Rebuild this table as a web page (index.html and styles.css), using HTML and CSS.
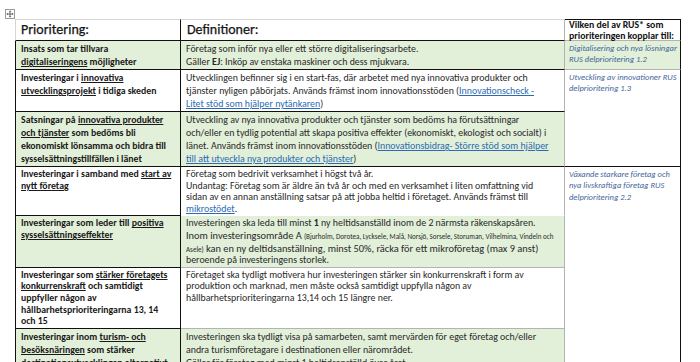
FILE: index.html
```html
<!DOCTYPE html>
<html lang="sv">
<head>
<meta charset="utf-8">
<title>Prioritering</title>
<link rel="stylesheet" href="styles.css">
</head>
<body>
<div class="page">
  <svg class="move-handle" width="10" height="10" viewBox="0 0 10 10" aria-hidden="true">
    <rect x="0.5" y="0.5" width="9" height="9" fill="#fff" stroke="#9a9a9a"/>
    <path d="M5 2.2v5.6M2.2 5h5.6" stroke="#555" stroke-width="0.9"/>
    <path d="M5 1.4l-1.3 1.4h2.6zM5 8.6l-1.3-1.4h2.6zM1.4 5l1.4-1.3v2.6zM8.6 5l-1.4-1.3v2.6z" fill="#555"/>
  </svg>
  <div class="sheet">
    <div class="cell h h1">Prioritering:</div>
    <div class="cell h h2">Definitioner:</div>
    <div class="cell h3">Vilken del av RUS* som<br>prioriteringen kopplar till:</div>

    <div class="cell p g loose">Insats som tar tillvara<br><u>digitaliseringens</u> möjligheter</div>
    <div class="cell d g loose">Företag som inför nya eller ett större digitaliseringsarbete.<br>Gäller <b>EJ</b>: Inköp av enstaka maskiner och dess mjukvara.</div>
    <div class="cell r ra g">Digitalisering och nya lösningar<br>RUS delprioritering 1.2</div>

    <div class="cell p loose">Investeringar i <u>innovativa</u><br><u>utvecklingsprojekt</u> i tidiga skeden</div>
    <div class="cell d loose">Utvecklingen befinner sig i en start-fas, där arbetet med nya innovativa produkter och<br>tjänster nyligen påbörjats. Används främst inom innovationsstöden (<a class="lnk" href="#">Innovationscheck -</a><br><a class="lnk" href="#">Litet stöd som hjälper nytänkaren</a>)</div>
    <div class="cell r rb">Utveckling av innovationer RUS<br>delprioritering 1.3</div>

    <div class="cell p g loose">Satsningar på <u>innovativa produkter</u><br><u>och tjänster</u> som bedöms bli<br>ekonomiskt lönsamma och bidra till<br>sysselsättningstillfällen i länet</div>
    <div class="cell d g loose">Utveckling av nya innovativa produkter och tjänster som bedöms ha förutsättningar<br>och/eller en tydlig potential att skapa positiva effekter (ekonomiskt, ekologist och socialt) i<br>länet. Används främst inom innovationsstöden (<a class="lnk" href="#">Innovationsbidrag- Större stöd som hjälper</a><br><a class="lnk" href="#">till att utveckla nya produkter och tjänster</a>)</div>

    <div class="cell p tight">Investeringar i samband med <u>start av</u><br><u>nytt företag</u></div>
    <div class="cell d none tight">Företag som bedrivit verksamhet i högst två år.<br>Undantag: Företag som är äldre än två år och med en verksamhet i liten omfattning vid<br>sidan av en annan anställning satsar på att jobba heltid i företaget. Används främst till<br><a class="lnk" href="#">mikrostödet</a>.</div>
    <div class="cell r rc">Växande starkare företag och<br>nya livskraftiga företag RUS<br>delprioritering 2.2</div>

    <div class="cell p g tight">Investeringar som leder till <u>positiva</u><br><u>sysselsättningseffekter</u></div>
    <div class="cell d g soft tight">Investeringen ska leda till minst <b>1</b> ny heltidsanställd inom de 2 närmsta räkenskapsåren.<br><span class="big">Inom investeringsområde A</span> <span class="tiny">(Bjurholm, Dorotea, Lycksele, Malå, Norsjö, Sorsele, Storuman, Vilhelmina, Vindeln och</span><br><span class="tiny">Asele)</span> <span class="big">kan en ny deltidsanställning, minst 50%, räcka för ett mikroföretag (max 9 anst)</span><br>beroende på investeringens storlek.</div>

    <div class="cell p tight">Investeringar som <u>stärker företagets</u><br><u>konkurrenskraft</u> och samtidigt<br>uppfyller någon av<br>hållbarhetsprioriteringarna 13, 14<br>och 15</div>
    <div class="cell d soft tight">Företaget ska tydligt motivera hur investeringen stärker sin konkurrenskraft i form av<br>produktion och marknad, men måste också samtidigt uppfylla någon av<br>hållbarhetsprioriteringarna 13,14 och 15 längre ner.</div>

    <div class="cell p g loose">Investeringar inom <u>turism- och</u><br><u>besöksnäringen</u> som stärker<br>destinationsutvecklingen alternativt</div>
    <div class="cell d g loose">Investeringen ska tydligt visa på samarbeten, samt mervärden för eget företag och/eller<br>andra turismföretagare i destinationen eller närområdet.<br>Gäller för företag med minst 1 heltidsanställd över året.</div>
  </div>
</div>
</body>
</html>
```

FILE: styles.css
```css
html, body {
  margin: 0;
  padding: 0;
  background: #ffffff;
  overflow: hidden;
}

body {
  font-family: Carlito, Lato, "Liberation Sans", sans-serif;
  color: #292929;
}

.page {
  position: relative;
  width: 700px;
  height: 362px;
  box-sizing: border-box;
  padding: 19px 0 0 15px;
}

.move-handle {
  position: absolute;
  left: 5px;
  top: 9px;
}

.sheet {
  display: grid;
  grid-template-columns: 166px 384px 116px;
}

.cell {
  box-sizing: border-box;
  white-space: nowrap;
  overflow: hidden;
}

.g {
  background: #e2efd9;
}

.loose {
  line-height: 13px;
}

.tight {
  line-height: 11.6px;
}

/* header */
.h {
  font-size: 14px;
  line-height: 20px;
  padding: 0 5px;
  border-top: 1px solid #d6d6d6;
  border-bottom: 1px solid #111;
  color: #141414;
  -webkit-text-stroke: 0.25px #141414;
}

.h1 {
  grid-column: 1;
  border-left: 1px solid #d6d6d6;
  border-right: 1px solid #111;
}

.h2 {
  grid-column: 2;
  padding-left: 6px;
  border-right: 1px solid #b3b3b3;
}

.h3 {
  grid-column: 3;
  grid-row: 1;
  height: 22px;
  overflow: visible;
  border-top: 1px solid #111;
  border-right: 1px solid #111;
  border-bottom: 1px solid #b3b3b3;
  padding: 0 2px 0 4px;
  font-size: 9.8px;
  line-height: 11px;
  font-weight: 700;
  color: #111;
}

/* column 1 */
.p {
  grid-column: 1;
  border-left: 1px solid #111;
  border-right: 1px solid #111;
  border-bottom: 1px solid #111;
  padding: 2px 2px 0 5px;
  font-size: 9.8px;
  font-weight: 700;
  color: #1a1a1a;
}

/* column 2 */
.d {
  grid-column: 2;
  border-right: 1px solid #b3b3b3;
  border-bottom: 1px solid #111;
  padding: 2px 2px 0 5px;
  font-size: 9.9px;
}

.d.soft {
  border-bottom-color: #b3b3b3;
}

.d.none {
  border-bottom-color: transparent;
}

.big {
  font-size: 10.4px;
}

.tiny {
  font-size: 7.1px;
}

.lnk {
  color: #2a6bb3;
  text-decoration: underline;
}

/* column 3 */
.r {
  grid-column: 3;
  border-right: 1px solid #111;
  padding: 2px 2px 0 4px;
  font-style: italic;
  font-size: 8.5px;
  line-height: 11.3px;
  color: #45679b;
}

.ra {
  grid-row: 2;
  border-bottom: 1px solid #b3b3b3;
}

.rb {
  grid-row: 3 / span 2;
  border-bottom: 1px solid #111;
}

.rc {
  grid-row: 5 / span 4;
}
```
